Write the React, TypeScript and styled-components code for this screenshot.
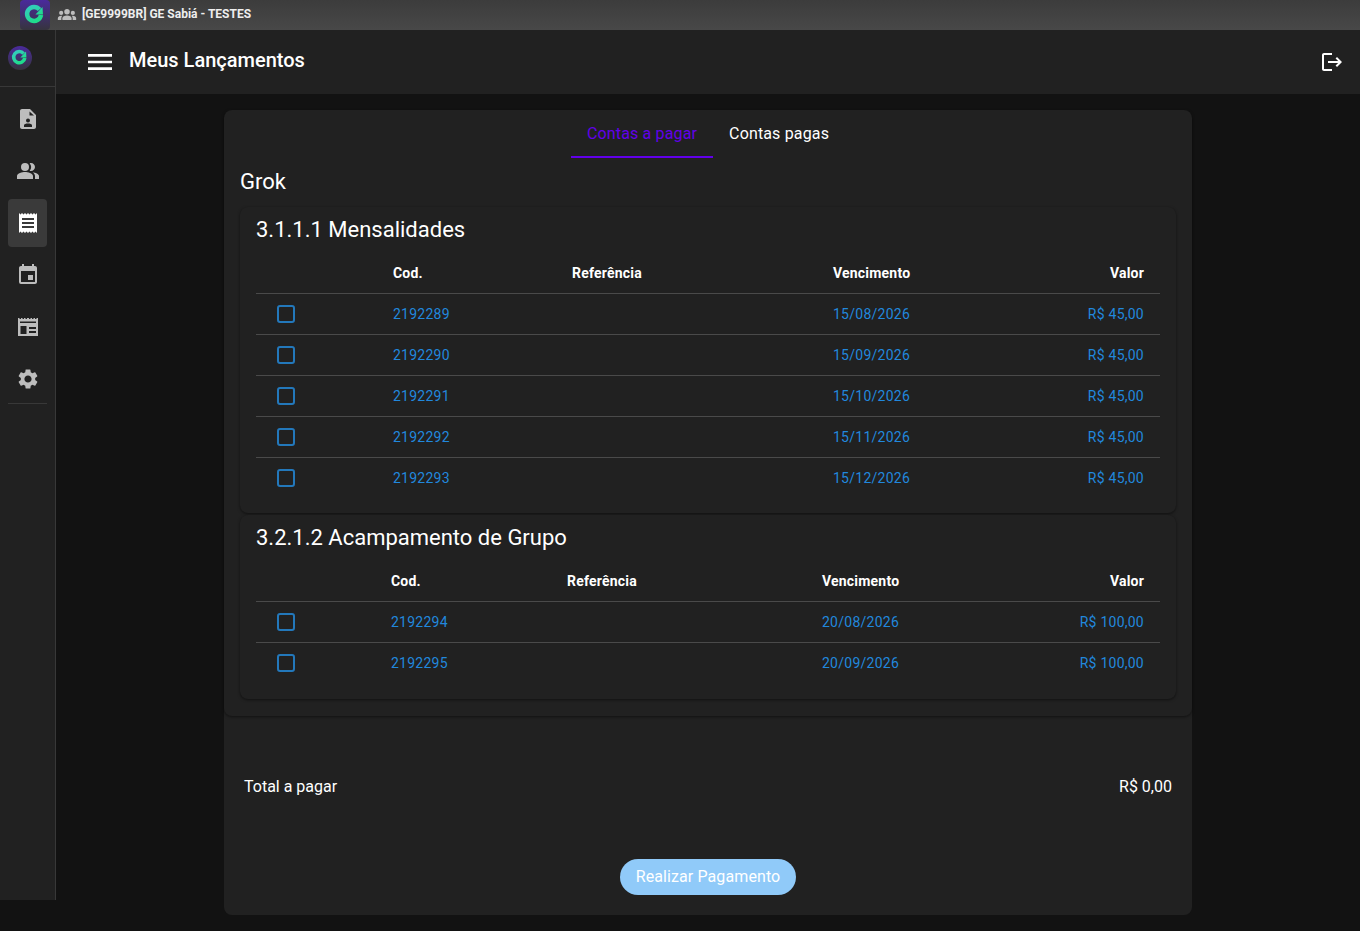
import React from "react";
import styled, { createGlobalStyle } from "styled-components";
import { MdEvent, MdLogout, MdMenu, MdPeopleAlt, MdReceipt, MdSettings } from "react-icons/md";

const GlobalStyle = createGlobalStyle`
  html, body {
    margin: 0;
    padding: 0;
    background: #121212;
    color: #fff;
    font-family: Roboto, "Liberation Sans", sans-serif;
  }
`;

type Entry = { cod: string; venc: string; valor: string };

const mensalidades: Entry[] = [
  { cod: "2192289", venc: "15/08/2026", valor: "R$ 45,00" },
  { cod: "2192290", venc: "15/09/2026", valor: "R$ 45,00" },
  { cod: "2192291", venc: "15/10/2026", valor: "R$ 45,00" },
  { cod: "2192292", venc: "15/11/2026", valor: "R$ 45,00" },
  { cod: "2192293", venc: "15/12/2026", valor: "R$ 45,00" },
];

const acampamento: Entry[] = [
  { cod: "2192294", venc: "20/08/2026", valor: "R$ 100,00" },
  { cod: "2192295", venc: "20/09/2026", valor: "R$ 100,00" },
];

const Logo = ({ size, round }: { size: number; round?: boolean }) => {
  const id = round ? "R" : "S";
  return (
    <svg width={size} height={size} viewBox="0 0 30 30">
      <defs>
        <linearGradient id={`bg${id}`} x1="0" y1="0" x2="0" y2="1">
          <stop offset="0" stopColor="#4a2a9c" />
          <stop offset="1" stopColor="#36343e" />
        </linearGradient>
        <linearGradient id={`ring${id}`} x1="0" y1="0" x2="0.6" y2="1">
          <stop offset="0" stopColor="#35c9c0" />
          <stop offset="1" stopColor="#1fdc8c" />
        </linearGradient>
      </defs>
      {round ? (
        <circle cx="15" cy="15" r="15" fill={`url(#bg${id})`} />
      ) : (
        <rect width="30" height="30" rx="4" fill={`url(#bg${id})`} />
      )}
      <path
        d="M19.5 9.5A7 7 0 1 0 21 15"
        fill="none"
        stroke={`url(#ring${id})`}
        strokeWidth="4.5"
      />
      <path d="M15.5 14.5h7.5l-.5-7.500z" fill={`url(#ring${id})`} />
    </svg>
  );
};

const GroupGlyph = () => (
  <svg width="20" height="20" viewBox="0 0 24 24" fill="currentColor">
    <circle cx="12" cy="8" r="3.3" />
    <circle cx="5" cy="9.5" r="2.5" />
    <circle cx="19" cy="9.5" r="2.5" />
    <path d="M6.5 18v-2.2c0-2 2.5-3.3 5.5-3.3s5.500 1.300 5.500 3.300V18h-11z" />
    <path d="M1 18v-2c0-1.700 1.800-3 4.200-3 .4 0 .7 0 1 .1-.7.7-1 1.600-1 2.700V18H1z" />
    <path d="M23 18v-2c0-1.700-1.800-3-4.200-3-.4 0-.7 0-1 .1.7.7 1 1.600 1 2.700V18H23z" />
  </svg>
);

const PersonFileIcon = () => (
  <svg width="24" height="24" viewBox="0 0 24 24" fill="currentColor">
    <path
      fillRule="evenodd"
      d="M6 2h8l6 6v12c0 1.100-.9 2-2 2H6c-1.100 0-2-.9-2-2V4c0-1.100.9-2 2-2zm7.500 2.500V8.500h4.500L13.500 4.500zM12 11.500a2 2 0 1 0 0 4 2 2 0 0 0 0-4zM8 20h8v-1.400c0-.8-.5-1.500-1.200-1.700-.85-.3-1.800-.4-2.800-.4s-1.950.1-2.800.4C8.500 17.100 8 17.800 8 18.600V20z"
    />
  </svg>
);

const NewsIcon = () => (
  <svg width="24" height="24" viewBox="0 0 24 24" fill="currentColor">
    <path
      fillRule="evenodd"
      d="M2 3h1.500v1H5V3h1.500v1H8V3h1.500v1H11V3h2v1h1.500V3H16v1h1.500V3H19v1h1.500V3H22v18H2V3zm2 3.500V8h16V6.500H4zM4.500 11v8h6v-8h-6zM13 12v2h7v-2h-7zm0 4v2h7v-2h-7z"
    />
  </svg>
);

const App = () => (
  <>
    <GlobalStyle />
    <TopBar>
      <TopLogo>
        <Logo size={30} />
      </TopLogo>
      <GroupIcon>
        <GroupGlyph />
      </GroupIcon>
      <TopTitle>[GE9999BR] GE Sabiá - TESTES</TopTitle>
    </TopBar>
    <Shell>
      <Sidebar>
        <SideLogo>
          <Logo size={24} round />
        </SideLogo>
        <SideMenu>
          <SideItem><PersonFileIcon /></SideItem>
          <SideItem><MdPeopleAlt size={24} /></SideItem>
          <SideItem $active><MdReceipt size={24} /></SideItem>
          <SideItem><MdEvent size={24} /></SideItem>
          <SideItem><NewsIcon /></SideItem>
          <SideItem><MdSettings size={24} /></SideItem>
        </SideMenu>
        <SideDivider />
      </Sidebar>
      <Main>
        <Header>
          <HeaderLeft>
            <Burger>
              <MdMenu size={32} />
            </Burger>
            <HeaderTitle>Meus Lançamentos</HeaderTitle>
          </HeaderLeft>
          <LogoutButton>
            <MdLogout size={24} />
          </LogoutButton>
        </Header>
        <Content>
          <Card>
            <TopPanel>
              <Tabs>
                <Tab $active>Contas a pagar</Tab>
                <Tab>Contas pagas</Tab>
              </Tabs>
              <PersonName>Grok</PersonName>
              <SectionList>
                <Section
                  title="3.1.1.1 Mensalidades"
                  columns="137px 179px 261px 1fr 1fr"
                  rows={mensalidades}
                />
                <Section
                  title="3.2.1.2 Acampamento de Grupo"
                  columns="135px 176px 255px 1fr 1fr"
                  rows={acampamento}
                />
              </SectionList>
            </TopPanel>
            <TotalRow>
              <span>Total a pagar</span>
              <span>R$ 0,00</span>
            </TotalRow>
            <PayRow>
              <PayButton>Realizar Pagamento</PayButton>
            </PayRow>
          </Card>
        </Content>
      </Main>
    </Shell>
  </>
);

const Section = ({ title, columns, rows }: { title: string; columns: string; rows: Entry[] }) => (
  <SectionCard>
    <SectionTitle>{title}</SectionTitle>
    <HeadRow $columns={columns}>
      <span />
      <span>Cod.</span>
      <span>Referência</span>
      <span>Vencimento</span>
      <ValueCell>Valor</ValueCell>
    </HeadRow>
    {rows.map((row) => (
      <BodyRow key={row.cod} $columns={columns}>
        <CheckCell>
          <CheckBox />
        </CheckCell>
        <span>{row.cod}</span>
        <span />
        <span>{row.venc}</span>
        <ValueCell>{row.valor}</ValueCell>
      </BodyRow>
    ))}
  </SectionCard>
);

export default App;

const TopBar = styled.div`
  height: 30px;
  display: flex;
  align-items: center;
  padding-left: 20px;
  background: linear-gradient(180deg, #3c3c3c 0%, #484848 100%);
`;

const TopLogo = styled.div`
  width: 30px;
  height: 30px;
`;

const GroupIcon = styled.div`
  display: flex;
  margin-left: 7px;
  color: #bdbdbd;
`;

const TopTitle = styled.div`
  margin-left: 5px;
  padding-bottom: 2px;
  font-size: 12px;
  font-weight: 700;
  color: #eeeeee;
`;

const Shell = styled.div`
  display: flex;
  align-items: flex-start;
`;

const Sidebar = styled.div`
  width: 55px;
  height: 870px;
  flex-shrink: 0;
  background: #212121;
  border-right: 1px solid #383838;
`;

const SideLogo = styled.div`
  height: 57px;
  box-sizing: border-box;
  padding: 16px 0 0 8px;
  border-bottom: 1px solid #383838;
`;

const SideMenu = styled.div`
  display: flex;
  flex-direction: column;
  gap: 4px;
  margin-top: 8px;
  padding: 0 8px;
`;

const SideItem = styled.div<{ $active?: boolean }>`
  height: 48px;
  display: flex;
  align-items: center;
  justify-content: center;
  border-radius: 4px;
  background: ${({ $active }) => ($active ? "#3a3a3a" : "transparent")};
  color: ${({ $active }) => ($active ? "#ffffff" : "#bdbdbd")};
`;

const SideDivider = styled.div`
  height: 1px;
  margin: 0 8px;
  background: #383838;
`;

const Main = styled.div`
  flex: 1;
  min-width: 0;
`;

const Header = styled.div`
  height: 64px;
  display: flex;
  align-items: center;
  justify-content: space-between;
  padding: 0 16px 0 28px;
  background: #212121;
`;

const HeaderLeft = styled.div`
  display: flex;
  align-items: center;
  gap: 13px;
`;

const Burger = styled.div`
  display: flex;
  color: #ffffff;
`;

const HeaderTitle = styled.div`
  padding-bottom: 4px;
  font-size: 20px;
  font-weight: 500;
  line-height: 32px;
`;

const LogoutButton = styled.div`
  display: flex;
  color: #ffffff;
`;

const Content = styled.div`
  padding: 16px 168px 0;
`;

const Card = styled.div`
  height: 805px;
  display: flex;
  flex-direction: column;
  border-radius: 8px;
  background: #212121;
`;

const TopPanel = styled.div`
  height: 606px;
  flex-shrink: 0;
  padding: 0 16px;
  border-radius: 8px;
  box-shadow: 0 1px 3px rgba(0, 0, 0, 0.5);
`;

const Tabs = styled.div`
  display: flex;
  justify-content: center;
`;

const Tab = styled.div<{ $active?: boolean }>`
  height: 48px;
  box-sizing: border-box;
  padding: 0 16px;
  font-size: 16px;
  letter-spacing: 0.15px;
  line-height: 48px;
  color: ${({ $active }) => ($active ? "#6200ea" : "#ffffff")};
  border-bottom: 2px solid ${({ $active }) => ($active ? "#6200ea" : "transparent")};
`;

const PersonName = styled.div`
  margin-top: 10px;
  font-size: 22px;
  line-height: 28px;
`;

const SectionList = styled.div`
  display: flex;
  flex-direction: column;
  gap: 2px;
  margin-top: 11px;
`;

const SectionCard = styled.div`
  padding: 0 16px 14px;
  border-radius: 8px;
  background: #212121;
  box-shadow: 0 1px 3px rgba(0, 0, 0, 0.5);

  &:last-child {
    padding-bottom: 15px;
  }
`;

const SectionTitle = styled.div`
  height: 46px;
  font-size: 22px;
  line-height: 45px;
`;

const HeadRow = styled.div<{ $columns: string }>`
  height: 41px;
  box-sizing: border-box;
  display: grid;
  grid-template-columns: ${({ $columns }) => $columns};
  align-items: center;
  border-bottom: 1px solid #4a4a4a;
  font-size: 14px;
  font-weight: 700;
  letter-spacing: 0.2px;
  color: #ffffff;
`;

const BodyRow = styled(HeadRow)`
  font-weight: 400;
  letter-spacing: 0.25px;
  color: #2188dd;

  &:last-child {
    border-bottom-color: transparent;
  }
`;

const ValueCell = styled.span`
  justify-self: end;
  padding-right: 16px;
`;

const CheckCell = styled.span`
  display: flex;
  padding-left: 21px;
`;

const CheckBox = styled.span`
  width: 18px;
  height: 18px;
  box-sizing: border-box;
  border: 2px solid #2378bb;
  border-radius: 3px;
`;

const TotalRow = styled.div`
  display: flex;
  justify-content: space-between;
  margin-top: 61px;
  padding: 0 20px;
  font-size: 16px;
  line-height: 20px;
`;

const PayRow = styled.div`
  display: flex;
  justify-content: center;
  margin-top: 62px;
`;

const PayButton = styled.div`
  height: 36px;
  padding: 0 16px;
  border-radius: 18px;
  background: #90caf9;
  font-size: 16px;
  letter-spacing: 0.1px;
  line-height: 36px;
  color: #ffffff;
`;
